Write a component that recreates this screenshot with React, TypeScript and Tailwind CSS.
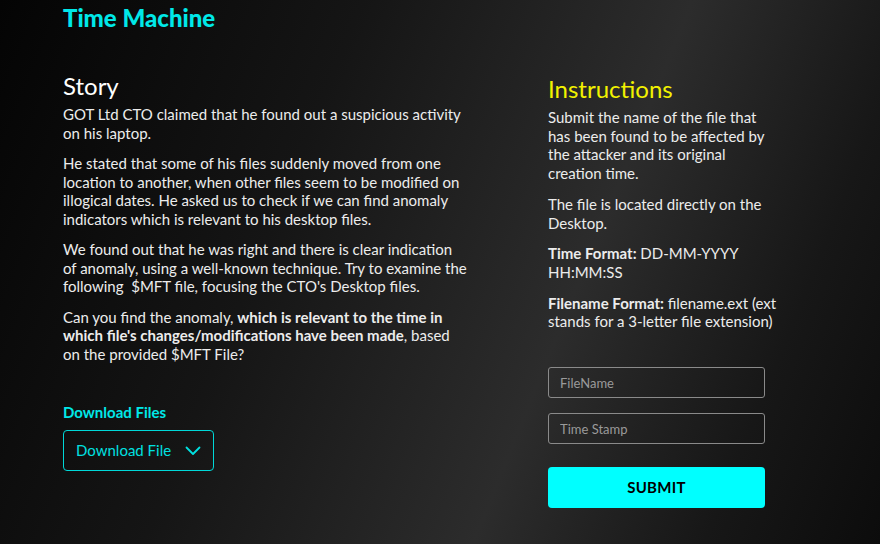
import React from "react";

export default function App() {
  return (
    <div
      className="w-full min-h-[544px] h-[544px] overflow-hidden bg-[linear-gradient(112deg,#040404_0%,#151515_33%,#2c2c2c_63%,#171717_84%,#0c0c0c_100%)] text-[#ececec] px-[63px]"
      style={{ fontFamily: "Lato, 'Open Sans', sans-serif" }}
    >
      <h1 className="text-[24px] leading-[28px] font-black text-[#00e8e8] pt-[4px]">Time Machine</h1>

      <div className="flex mt-[40px]">
        <div className="w-[485px] shrink-0">
          <h2 className="text-[24px] leading-[28px] font-normal text-white">Story</h2>
          <div className="text-[15px] leading-[18.5px] mt-[5px] flex flex-col gap-[12px]">
            <p>
              GOT Ltd CTO claimed that he found out a suspicious activity
              <br />
              on his laptop.
            </p>
            <p>
              He stated that some of his files suddenly moved from one
              <br />
              location to another, when other files seem to be modified on
              <br />
              illogical dates. He asked us to check if we can find anomaly
              <br />
              indicators which is relevant to his desktop files.
            </p>
            <p>
              We found out that he was right and there is clear indication
              <br />
              of anomaly, using a well-known technique. Try to examine the
              <br />
              following&nbsp; $MFT file, focusing the CTO's Desktop files.
            </p>
            <p>
              Can you find the anomaly, <b className="font-bold">which is relevant to the time in</b>
              <br />
              <b className="font-bold">which file's changes/modifications have been made</b>, based
              <br />
              on the provided $MFT File?
            </p>
          </div>

          <div className="mt-[40px] text-[15px] leading-[18px] font-bold text-[#00e8e8]">Download Files</div>
          <button className="mt-[9px] w-[151px] h-[41px] border border-[#00d8d8] rounded-[4px] flex items-center pl-[12px] pr-[12px] gap-[10px] text-[#00e0e0] text-[15px]">
            <span>Download File</span>
            <svg width="16" height="10" viewBox="0 0 16 10" fill="none" className="ml-auto">
              <path d="M1.5 1.5 L8 8 L14.5 1.5" stroke="#00e0e0" strokeWidth="1.8" strokeLinecap="round" strokeLinejoin="round" />
            </svg>
          </button>
        </div>

        <div className="w-[240px] shrink-0 pt-[2px]">
          <h2 className="text-[24px] leading-[30px] font-normal text-[#f2f200]">Instructions</h2>
          <div className="text-[15px] leading-[18.7px] mt-[4px] flex flex-col gap-[12px]">
            <p>
              Submit the name of the file that
              <br />
              has been found to be affected by
              <br />
              the attacker and its original
              <br />
              creation time.
            </p>
            <p>
              The file is located directly on the
              <br />
              Desktop.
            </p>
            <p>
              <b className="font-bold">Time Format:</b> DD-MM-YYYY
              <br />
              HH:MM:SS
            </p>
            <p>
              <b className="font-bold">Filename Format:</b> filename.ext (ext
              <br />
              stands for a 3-letter file extension)
            </p>
          </div>

          <div className="mt-[36px] flex flex-col gap-[15px] w-[217px]">
            <input
              placeholder="FileName"
              className="h-[31px] w-full bg-transparent border border-[#8a8a8a] rounded-[3px] px-[11px] text-[13px] text-white placeholder:text-[#9a9a9a] outline-none"
            />
            <input
              placeholder="Time Stamp"
              className="h-[31px] w-full bg-transparent border border-[#8a8a8a] rounded-[3px] px-[11px] text-[13px] text-white placeholder:text-[#9a9a9a] outline-none"
            />
          </div>
          <button className="mt-[23px] w-[217px] h-[41px] bg-[#00ffff] rounded-[4px] text-black font-bold text-[15px] tracking-[0.3px]">
            SUBMIT
          </button>
        </div>
      </div>
    </div>
  );
}
